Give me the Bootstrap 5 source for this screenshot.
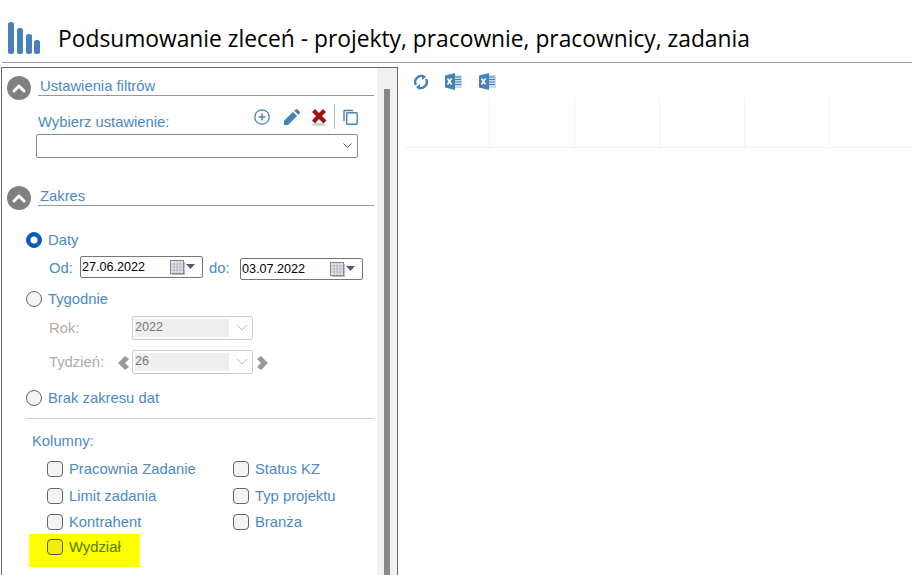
<!DOCTYPE html>
<html lang="pl">
<head>
<meta charset="utf-8">
<title>Podsumowanie zleceń</title>
<link href="https://cdn.jsdelivr.net/npm/bootstrap@5.3.0/dist/css/bootstrap.min.css" rel="stylesheet">
<style>
html,body{height:575px;overflow:hidden;background:#fff;}
body{font-family:"Liberation Sans",Arial,sans-serif;font-size:14.8px;color:#4a8ac6;}
.app-head{height:63px;margin-left:2px;border-bottom:1px solid #999;}
.app-logo{margin:22px 0 0 6px;}
.app-title{font-family:"Open Sans","Noto Sans",sans-serif;font-size:22.8px;font-weight:400;color:#000;margin:0 0 0 17px;line-height:30px;padding-top:24px;}
.app-main{height:512px;}
.left-panel{width:397px;margin:4px 0 0 1px;border:1px solid #666;border-bottom:0;height:508px;flex:none;}
.panel-body{width:375px;flex:none;}
.scroll-track{width:20px;background:#f0f0f0;}
.scroll-thumb{width:6px;height:100%;margin:21px 0 0 7px;background:#888;}
.sec-head{height:24px;margin-left:5px;}
.sec-circle{width:24px;height:24px;background:#808080;border-radius:50%;flex:none;}
.sec-title{width:336px;height:20px;margin-left:7px;border-bottom:1px solid #999;padding:1px 0 0 2px;line-height:19px;}
.first-head{margin-top:8px;}
.second-head{margin-top:28px;}
.pick-row{height:34px;margin-left:36px;width:320px;}
.pick-label{margin-top:14px;line-height:17px;}
.tool-ico{margin-top:9px;flex:none;}
.ico-pencil{margin-left:14px;}
.ico-cross{margin-left:10px;}
.tool-sep{width:1px;height:25px;margin:4px 7px 0 6px;background:#bbb;flex:none;}
.combo{height:24px;border:1px solid #888;border-radius:2px;background:#fff;}
.pick-combo{width:322px;margin-left:34px;padding-right:5px;}
.mt-after{margin-top:22px;}
.choice{margin-left:24px;height:16px;line-height:16px;gap:6px;}
.form-check-input.tick{width:16px;height:16px;margin:0;flex:none;background-color:#f4f4f4;border:1px solid #666;box-shadow:none;}
.form-check-input.tick[type=checkbox]{border-radius:4px;}
.form-check-input.tick[type=radio]:checked{background-color:#0a5fb4;border-color:#0a5fb4;}
.date-row{margin:8px 0 0 47px;height:24px;}
.date-lbl{line-height:24px;width:31px;flex:none;}
.date-box{width:123px;height:22px;border:1px solid #777;border-radius:2px;color:#000;padding-left:1px;font-size:12.6px;line-height:20px;flex:none;}
.date-two{margin-top:2px;}
.date-do{margin-left:6px;}
.date-ico{margin:2px 0 0 auto;flex:none;}
.w-rok{margin:9px 0 0 47px;height:24px;}
.w-tyd{margin:10px 0 0 47px;height:24px;}
.muted-lbl{color:#b3aaa2;line-height:24px;width:83px;flex:none;}
.muted-combo{width:121px;height:24px;border:1px solid #ccc;border-radius:2px;padding:2px;color:#777;font-size:12.6px;line-height:17px;flex:none;}
.muted-fill{width:94px;height:18px;background:#efefef;flex:none;}
.muted-chev{margin:3px 0 0 7px;}
.tyd-lbl{color:#b3aaa2;line-height:24px;width:69px;flex:none;}
.nav-l{margin:6px 2px 0 0;flex:none;}
.nav-r{margin:6px 0 0 3px;flex:none;}
.third-radio{margin-top:16px;}
.tyg-radio{margin-top:11px;}
.split-line{height:1px;background:#ccc;margin:12px 0 0 24px;width:348px;}
.cols-lbl{margin:14px 0 0 30px;line-height:17px;}
.cols-grid{display:grid;grid-template-columns:186px 1fr;grid-template-rows:27px 26px 20px;margin:11px 0 0 45px;}
.cols-item{gap:6px;height:16px;line-height:16px;}
.hl-box{width:111px;height:33px;background:#ff0;margin-left:27px;padding:5px 0 0 18px;color:#4e8000;}
.form-check-input.tick.hl-tick{background-color:#f0f000;border-color:#555;}
.right-panel{flex:1;padding-left:7px;min-width:0;}
.right-tools{height:31px;margin-top:4px;}
.r-ico{flex:none;}
.ico-sync{margin:7px 0 0 8px;}
.ico-xl-a{margin:6px 0 0 16px;}
.ico-xl-b{margin:6px 0 0 17px;}
.grid-head{height:50px;border-bottom:1px solid #f2f2f2;}
.grid-cell{width:85px;height:49px;border-right:1px solid #f2f2f2;flex:none;}
</style>
</head>
<body>
<header class="app-head d-flex">
  <svg class="app-logo" width="33" height="32" viewBox="0 0 33 32" fill="#4682b8"><rect x="0" y="0" width="6" height="32" rx="2.5"/><rect x="9" y="6" width="6" height="26" rx="2.5"/><rect x="18" y="12" width="6" height="20" rx="2.5"/><rect x="26" y="18" width="6" height="14" rx="2.5"/></svg>
  <h1 class="app-title">Podsumowanie zleceń - projekty, pracownie, pracownicy, zadania</h1>
</header>
<div class="app-main d-flex">
  <aside class="left-panel d-flex">
    <div class="panel-body">
      <div class="sec-head first-head d-flex">
        <span class="sec-circle d-flex align-items-center justify-content-center"><svg width="14" height="10" viewBox="0 0 14 10"><path d="M2 8l5-5 5 5" fill="none" stroke="#fff" stroke-width="3" stroke-linecap="round" stroke-linejoin="round"/></svg></span>
        <div class="sec-title">Ustawienia filtrów</div>
      </div>
      <div class="pick-row d-flex">
        <div class="pick-label">Wybierz ustawienie:</div>
        <svg class="tool-ico ms-auto" width="16" height="16" viewBox="0 0 16 16"><circle cx="8" cy="8" r="7.2" fill="none" stroke="#4682b8" stroke-width="1.300"/><path d="M4.500 8h7M8 4.500v7" stroke="#4682b8" stroke-width="1.500"/></svg>
        <svg class="tool-ico ico-pencil" width="16" height="16" viewBox="0 0 16 16" fill="#4682b8"><path d="M0 16v-4.200L9 3l4 4-9 9zM10.200 1.800L11.600.5a1.400 1.400 0 0 1 2 0l1.900 1.900a1.400 1.400 0 0 1 0 2L14.200 5.800z"/></svg>
        <svg class="tool-ico ico-cross" width="18" height="18" viewBox="0 0 18 18"><ellipse cx="9" cy="15.500" rx="7" ry="1.500" fill="#ccc"/><path d="M2 3l3-3 4 4 4-4 3 3-4 4 4.500 4.500-3 3L9 10l-4 4.500-3-3L6 7z" fill="#9c1414"/></svg>
        <span class="tool-sep"></span>
        <svg class="tool-ico" width="16" height="16" viewBox="0 0 16 16" fill="none" stroke="#4682b8" stroke-width="1.400"><path d="M2 12V1.500h9"/><rect x="4.700" y="3.700" width="10.500" height="11.600" rx="1"/></svg>
      </div>
      <div class="combo pick-combo d-flex align-items-center justify-content-end"><svg width="9" height="6" viewBox="0 0 9 6"><path d="M.5.500l4 4 4-4" fill="none" stroke="#555" stroke-width="1"/></svg></div>

      <div class="sec-head second-head d-flex">
        <span class="sec-circle d-flex align-items-center justify-content-center"><svg width="14" height="10" viewBox="0 0 14 10"><path d="M2 8l5-5 5 5" fill="none" stroke="#fff" stroke-width="3" stroke-linecap="round" stroke-linejoin="round"/></svg></span>
        <div class="sec-title">Zakres</div>
      </div>
      <label class="choice mt-after d-flex"><input class="form-check-input tick" type="radio" name="zakres" checked><span>Daty</span></label>
      <div class="date-row d-flex">
        <span class="date-lbl">Od:</span>
        <div class="date-box d-flex"><span>27.06.2022</span>
          <svg class="date-ico" width="32" height="17" viewBox="0 0 32 17"><rect x="2" y="3" width="13" height="13" fill="#bbb"/><rect x="0.500" y="1.500" width="13" height="13" fill="#e8e8e8" stroke="#888"/><path d="M4 2v12M7 2v12M10 2v12M1 5h12M1 8h12M1 11h12" stroke="#aab" stroke-width="0.700"/><path d="M16 5h9l-4.500 5z" fill="#4a5e80"/></svg></div>
        <span class="date-lbl date-do">do:</span>
        <div class="date-box date-two d-flex"><span>03.07.2022</span>
          <svg class="date-ico" width="32" height="17" viewBox="0 0 32 17"><rect x="2" y="3" width="13" height="13" fill="#bbb"/><rect x="0.500" y="1.500" width="13" height="13" fill="#e8e8e8" stroke="#888"/><path d="M4 2v12M7 2v12M10 2v12M1 5h12M1 8h12M1 11h12" stroke="#aab" stroke-width="0.700"/><path d="M16 5h9l-4.500 5z" fill="#4a5e80"/></svg></div>
      </div>
      <label class="choice tyg-radio d-flex"><input class="form-check-input tick" type="radio" name="zakres"><span>Tygodnie</span></label>
      <div class="w-rok d-flex">
        <span class="muted-lbl">Rok:</span>
        <div class="muted-combo d-flex"><span class="muted-fill">2022</span><svg class="muted-chev" width="12" height="12" viewBox="0 0 12 12"><path d="M1 3l5 5 5-5" fill="none" stroke="#bbb"/></svg></div>
      </div>
      <div class="w-tyd d-flex">
        <span class="tyd-lbl">Tydzień:</span>
        <svg class="nav-l" width="12" height="14" viewBox="0 0 12 14"><path d="M7 0l4 3L7 7l4 4-4 3L0 7z" fill="#999"/></svg>
        <div class="muted-combo d-flex"><span class="muted-fill">26</span><svg class="muted-chev" width="12" height="12" viewBox="0 0 12 12"><path d="M1 3l5 5 5-5" fill="none" stroke="#bbb"/></svg></div>
        <svg class="nav-r" width="12" height="14" viewBox="0 0 12 14"><path d="M5 0L1 3l4 4-4 4 4 3 7-7z" fill="#999"/></svg>
      </div>
      <label class="choice third-radio d-flex"><input class="form-check-input tick" type="radio" name="zakres"><span>Brak zakresu dat</span></label>
      <div class="split-line"></div>
      <div class="cols-lbl">Kolumny:</div>
      <div class="cols-grid">
        <label class="cols-item d-flex"><input class="form-check-input tick" type="checkbox"><span>Pracownia Zadanie</span></label>
        <label class="cols-item d-flex"><input class="form-check-input tick" type="checkbox"><span>Status KZ</span></label>
        <label class="cols-item d-flex"><input class="form-check-input tick" type="checkbox"><span>Limit zadania</span></label>
        <label class="cols-item d-flex"><input class="form-check-input tick" type="checkbox"><span>Typ projektu</span></label>
        <label class="cols-item d-flex"><input class="form-check-input tick" type="checkbox"><span>Kontrahent</span></label>
        <label class="cols-item d-flex"><input class="form-check-input tick" type="checkbox"><span>Branża</span></label>
      </div>
      <div class="hl-box"><label class="cols-item d-flex"><input class="form-check-input tick hl-tick" type="checkbox"><span>Wydział</span></label></div>
    </div>
    <div class="scroll-track"><div class="scroll-thumb"></div></div>
  </aside>
  <main class="right-panel">
    <div class="right-tools d-flex align-items-start">
      <svg class="r-ico ico-sync" width="16" height="16" viewBox="0 0 16 16" fill="none" stroke="#4682b8" stroke-width="2.400"><path d="M3 11A6 6 0 0 1 11 2.700M13 5a6 6 0 0 1-8 8.300"/><path d="M9 0l4 3-4 3z" fill="#4682b8" stroke="none"/><path d="M7 16l-4-3 4-3z" fill="#4682b8" stroke="none"/></svg>
      <svg class="r-ico ico-xl-a" width="17" height="17" viewBox="0 0 17 17"><path d="M9 2h8v13H9z" fill="#c9dcec"/><path d="M10 4h6M10 6.500h6M10 9h6M10 11.500h6" stroke="#4682b8"/><path d="M0 2.500L10 0v17L0 14.500z" fill="#4682b8"/><path d="M2.500 5.500l4 6M6.500 5.500l-4 6" stroke="#fff" stroke-width="1.500"/></svg>
      <svg class="r-ico ico-xl-b" width="17" height="17" viewBox="0 0 17 17"><path d="M9 2h8v13H9z" fill="#c9dcec"/><path d="M10 4h6M10 6.500h6M10 9h6M10 11.500h6" stroke="#4682b8"/><path d="M0 2.500L10 0v17L0 14.500z" fill="#4682b8"/><path d="M2.500 5.500l4 6M6.500 5.500l-4 6" stroke="#fff" stroke-width="1.500"/></svg>
    </div>
    <div class="grid-head d-flex">
      <div class="grid-cell"></div><div class="grid-cell"></div><div class="grid-cell"></div><div class="grid-cell"></div><div class="grid-cell"></div>
    </div>
  </main>
</div>
</body>
</html>
